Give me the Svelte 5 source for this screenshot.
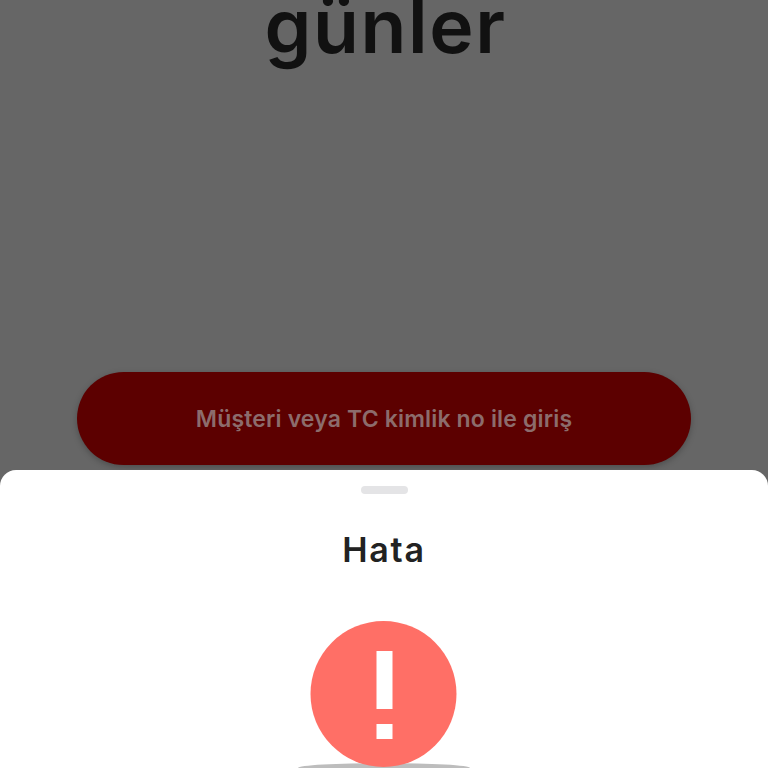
<script lang="ts">
	// login screen dimmed behind the error bottom sheet
	const title = 'günler';
	const loginLabel = 'Müşteri veya TC kimlik no ile giriş';
	const errorTitle = 'Hata';
</script>

<div class="screen">
	<section class="login">
		<h1 class="brand">{title}</h1>
		<button class="login-button" type="button">{loginLabel}</button>
	</section>

	<section class="sheet">
		<div class="handle"></div>
		<h2 class="sheet-title">{errorTitle}</h2>
		<div class="alert-icon">
			<svg viewBox="0 0 146 146" width="146" height="146" aria-hidden="true">
				<circle cx="72.5" cy="73" r="73" fill="#ff6f66" />
				<rect x="65.5" y="30" width="16" height="58" fill="#fff" />
				<rect x="65.5" y="103" width="16" height="15" fill="#fff" />
			</svg>
		</div>
		<div class="icon-shadow"></div>
	</section>
</div>

<style>
	:global(body) {
		margin: 0;
		background: #666;
	}

	.screen {
		height: 768px;
		overflow: hidden;
		display: flex;
		flex-direction: column;
		font-family: Inter, sans-serif;
	}

	.login {
		height: 470px;
		flex-shrink: 0;
		background: #666;
		display: flex;
		flex-direction: column;
		align-items: center;
	}

	.brand {
		margin: -18px 0 0 3px;
		height: 390px;
		font-size: 75px;
		font-weight: 600;
		line-height: 88px;
		letter-spacing: 1.6px;
		color: #111;
	}

	.login-button {
		width: 614px;
		height: 93px;
		flex-shrink: 0;
		border: none;
		border-radius: 46.5px;
		background: #5c0000;
		box-shadow: 0 2px 6px rgba(0, 0, 0, 0.25);
		color: #8c6c6c;
		font-family: inherit;
		font-size: 23px;
		font-weight: 600;
		letter-spacing: 0.16px;
	}

	.sheet {
		flex: 1;
		background: #fff;
		border-radius: 16px 16px 0 0;
		display: flex;
		flex-direction: column;
		align-items: center;
	}

	.handle {
		width: 47px;
		height: 8px;
		margin-top: 16px;
		border-radius: 4px;
		background: #e4e4e6;
	}

	.sheet-title {
		margin: 32px 0 0;
		height: 95px;
		font-size: 34px;
		font-weight: 600;
		line-height: 48px;
		letter-spacing: 1.7px;
		color: #222;
	}

	.alert-icon {
		position: relative;
		z-index: 1;
		width: 146px;
		height: 146px;
		flex-shrink: 0;
	}

	.alert-icon svg {
		display: block;
		overflow: visible;
	}

	.icon-shadow {
		width: 172px;
		height: 10px;
		flex-shrink: 0;
		margin-top: -4px;
		border-radius: 50%;
		background: #bdbdbd;
	}
</style>
